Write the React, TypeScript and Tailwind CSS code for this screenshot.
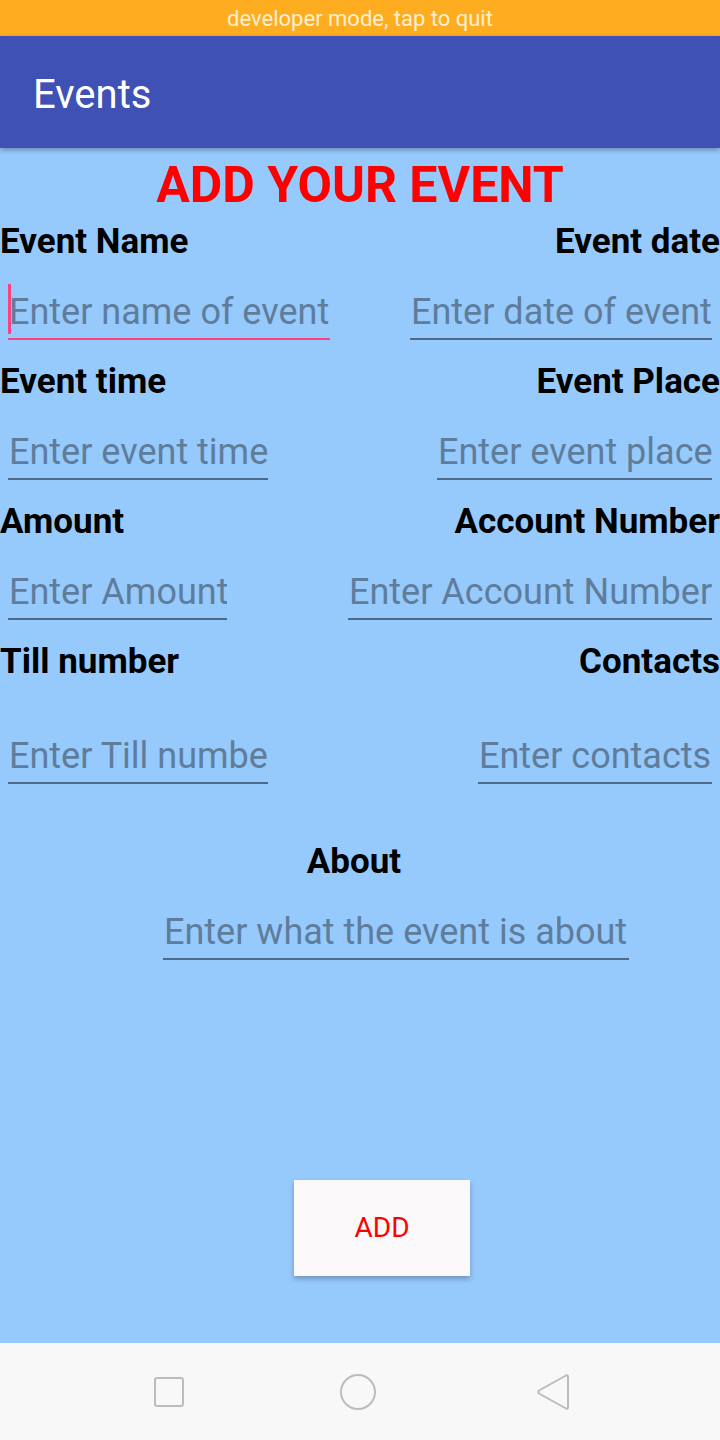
const Field = ({
  placeholder,
  width,
  focused,
}: {
  placeholder: string;
  width: string;
  focused?: boolean;
}) => {
  return (
    <div className={`relative ${width}`}>
      {focused && (
        <span className="absolute left-0 top-[0px] h-[50px] w-[3px] bg-[#ff4081]" />
      )}
      <input
        placeholder={placeholder}
        className={`h-[56px] w-full border-b-2 bg-transparent pl-[1px] pt-[1px] text-[36px] outline-none placeholder:text-[#5f7d9b] ${
          focused ? "border-[#ff4081]" : "border-[#4f6a88]"
        }`}
      />
    </div>
  );
};

const Row = ({
  left,
  right,
  children,
  top = "mt-[22px]",
  gap = "mt-[22px]",
}: {
  left: string;
  right: string;
  children: React.ReactNode;
  top?: string;
  gap?: string;
}) => {
  return (
    <div className={top}>
      <div className="flex h-[40px] items-center justify-between text-[35px] font-bold text-black">
        <span>{left}</span>
        <span>{right}</span>
      </div>
      <div className={`flex items-center justify-between px-[8px] ${gap}`}>
        {children}
      </div>
    </div>
  );
};

export default function App() {
  return (
    <div
      className="flex h-[1440px] w-[720px] flex-col overflow-hidden bg-[#96c9fc]"
      style={{ fontFamily: "Roboto, 'Noto Sans', sans-serif" }}
    >
      <div className="flex h-[36px] items-center justify-center bg-[#ffad20] text-[22px] text-[#fff0d2]">
        developer mode, tap to quit
      </div>
      <div className="relative z-10 flex h-[112px] items-center bg-[#3f51b5] px-[33px] pt-[6px] text-[40px] text-white shadow-[0_2px_5px_rgba(0,0,0,0.3)]">
        Events
      </div>

      <main className="flex flex-1 flex-col">
        <div className="flex h-[74px] items-center justify-center text-[50px] font-bold text-[#ff0000]">
          ADD YOUR EVENT
        </div>

        <Row left="Event Name" right="Event date" top="mt-0">
          <Field placeholder="Enter name of event" width="w-[322px]" focused />
          <Field placeholder="Enter date of event" width="w-[302px]" />
        </Row>
        <Row left="Event time" right="Event Place">
          <Field placeholder="Enter event time" width="w-[260px]" />
          <Field placeholder="Enter event place" width="w-[275px]" />
        </Row>
        <Row left="Amount" right="Account Number">
          <Field placeholder="Enter Amount" width="w-[219px]" />
          <Field placeholder="Enter Account Number" width="w-[364px]" />
        </Row>
        <Row left="Till number" right="Contacts" gap="mt-[46px]">
          <Field placeholder="Enter Till number" width="w-[260px]" />
          <Field placeholder="Enter contacts" width="w-[234px]" />
        </Row>

        <div className="mt-[58px] flex h-[40px] items-center justify-center pr-[12px] text-[35px] font-bold text-black">
          About
        </div>
        <div className="mt-[22px] flex justify-center pl-[72px]">
          <Field placeholder="Enter what the event is about" width="w-[466px]" />
        </div>

        <div className="mt-[220px] flex justify-center pl-[44px]">
          <button className="h-[96px] w-[176px] bg-[#faf8f8] text-[28px] text-[#ff0000] shadow-[0_3px_5px_rgba(0,0,0,0.25)]">
            ADD
          </button>
        </div>
      </main>

      <nav className="flex h-[97px] items-center bg-[#f8f8f8]">
        <div className="flex w-full items-center">
          <div className="flex flex-1 justify-end pr-[156px]">
            <svg width="30" height="30" viewBox="0 0 30 30" fill="none">
              <rect x="1" y="1" width="28" height="28" rx="2" stroke="#bcbcbc" strokeWidth="2" />
            </svg>
          </div>
          <svg width="36" height="36" viewBox="0 0 36 36" fill="none">
            <circle cx="18" cy="18" r="17" stroke="#bcbcbc" strokeWidth="2" />
          </svg>
          <div className="flex flex-1 justify-start pl-[160px]">
            <svg width="34" height="38" viewBox="0 0 34 38" fill="none">
              <path
                d="M30 2.5 Q32 1.5 32 4 L32 34 Q32 36.5 30 35.5 L3 20.5 Q1.5 19 3 17.5 Z"
                stroke="#bcbcbc"
                strokeWidth="2"
                strokeLinejoin="round"
              />
            </svg>
          </div>
        </div>
      </nav>
    </div>
  );
}
